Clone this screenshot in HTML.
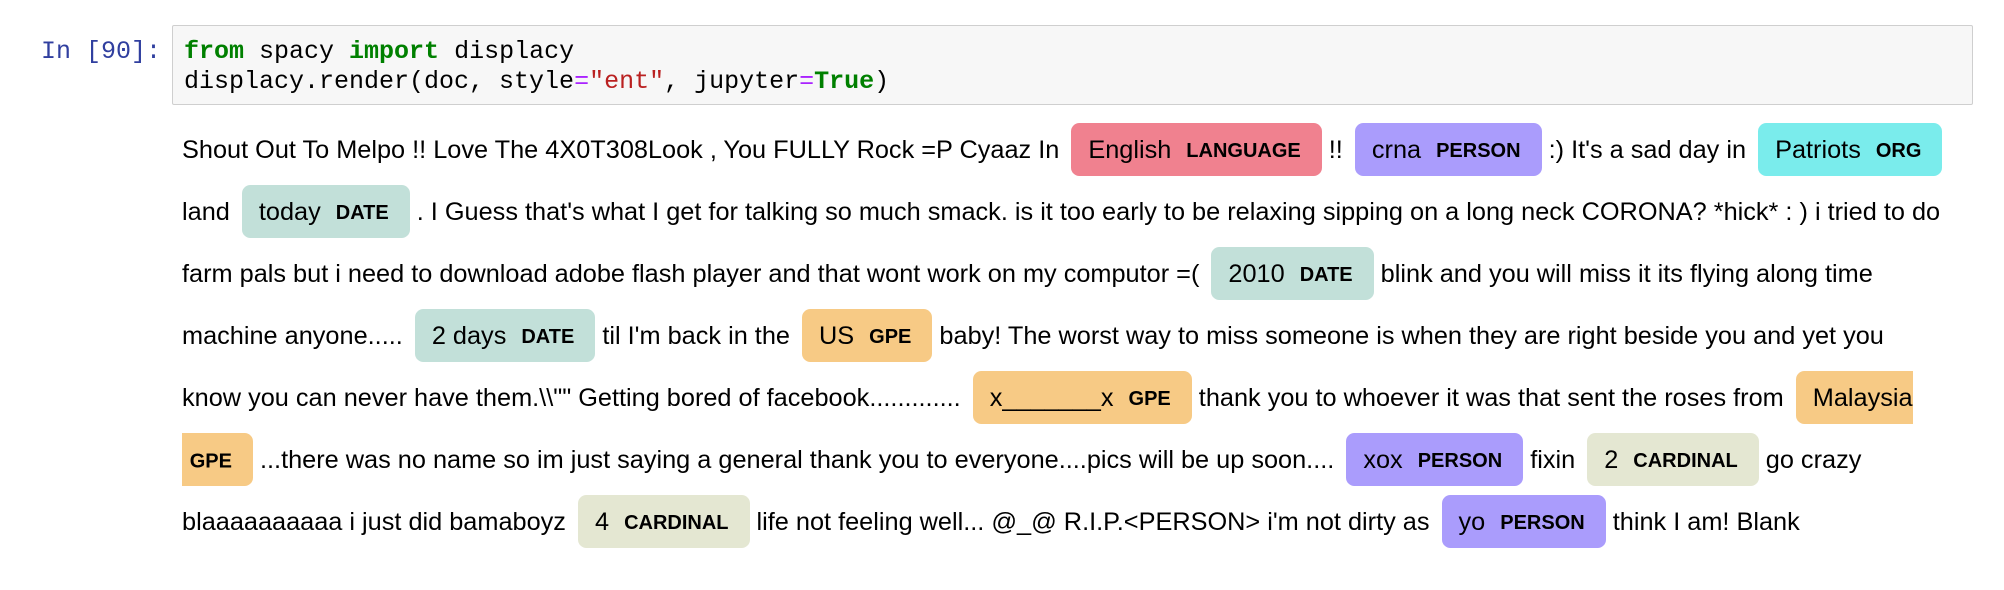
<!DOCTYPE html>
<html><head><meta charset="utf-8"><style>
body{margin:0;background:#fff;width:2004px;height:590px;overflow:hidden;position:relative;font-family:"Liberation Sans",Arial,sans-serif;}
.prompt{position:absolute;left:41px;top:37px;font-family:"Liberation Mono",monospace;font-size:25px;line-height:30px;color:#303f9f;}
.code{position:absolute;left:172px;top:25px;width:1801px;height:80px;background:#f7f7f7;border:1px solid #cfcfcf;border-radius:2px;box-sizing:border-box;}
.code pre{margin:0;position:absolute;left:11px;top:11px;font-family:"Liberation Mono",monospace;font-size:25px;line-height:30px;color:#000;}
.k{color:#008000;font-weight:bold}.s{color:#ba2121}.o{color:#aa22ff}
.out{position:absolute;left:182px;top:119px;font-size:25.3px;color:#000;}
.ln{height:62px;line-height:62px;white-space:nowrap;}
mark{padding:13px 21px 12px 17px;margin:0 0 0 5px;line-height:30px;border-radius:8.4px;color:#000;}
mark b{font-size:20px;font-weight:bold;margin-left:15px;vertical-align:middle;line-height:1;}
.LANGUAGE{background:#f0818f}.PERSON{background:#aa9cfc}.ORG{background:#7aecec}.DATE{background:#c2e0d9}.GPE{background:#f7ca85}.CARDINAL{background:#e4e7d2}
</style></head><body>
<div class="prompt">In [90]:</div>
<div class="code"><pre><span class="k">from</span> spacy <span class="k">import</span> displacy
displacy.render(doc, style<span class="o">=</span><span class="s">"ent"</span>, jupyter<span class="o">=</span><span class="k">True</span>)</pre></div>
<div class="out">
<div class="ln">Shout Out To Melpo !! Love The 4X0T308Look , You FULLY Rock =P Cyaaz In <mark class="LANGUAGE">English<b>LANGUAGE</b></mark> !! <mark class="PERSON">crna<b>PERSON</b></mark> :) It's a sad day in <mark class="ORG">Patriots<b>ORG</b></mark></div>
<div class="ln">land <mark class="DATE">today<b>DATE</b></mark> . I Guess that's what I get for talking so much smack. is it too early to be relaxing sipping on a long neck CORONA? *hick* : ) i tried to do</div>
<div class="ln">farm pals but i need to download adobe flash player and that wont work on my computor =( <mark class="DATE">2010<b>DATE</b></mark> blink and you will miss it its flying along time</div>
<div class="ln">machine anyone..... <mark class="DATE">2 days<b>DATE</b></mark> til I'm back in the <mark class="GPE">US<b>GPE</b></mark> baby! The worst way to miss someone is when they are right beside you and yet you</div>
<div class="ln">know you can never have them.\\"" Getting bored of facebook............. <mark class="GPE">x_______x<b>GPE</b></mark> thank you to whoever it was that sent the roses from <mark class="GPE" style="margin-right:0;border-radius:8.4px 0 0 8.4px;padding-right:0">Malaysia</mark></div>
<div class="ln" style="margin-left:-182px;padding-left:182px;position:relative"><mark class="GPE" style="position:absolute;left:182px;top:4px;margin:0;padding:13px 21px 12px 0;border-radius:0 8.4px 8.4px 0;width:50px;text-align:right;line-height:28px;height:28px"><b style="margin:0">GPE</b></mark><span style="margin-left:78px">...there was no name so im just saying a general thank you to everyone....pics will be up soon.... <mark class="PERSON">xox<b>PERSON</b></mark> fixin <mark class="CARDINAL">2<b>CARDINAL</b></mark> go crazy</span></div>
<div class="ln">blaaaaaaaaaa i just did bamaboyz <mark class="CARDINAL">4<b>CARDINAL</b></mark> life not feeling well... @_@ R.I.P.&lt;PERSON&gt; i'm not dirty as <mark class="PERSON">yo<b>PERSON</b></mark> think I am! Blank</div>
</div>
</body></html>
